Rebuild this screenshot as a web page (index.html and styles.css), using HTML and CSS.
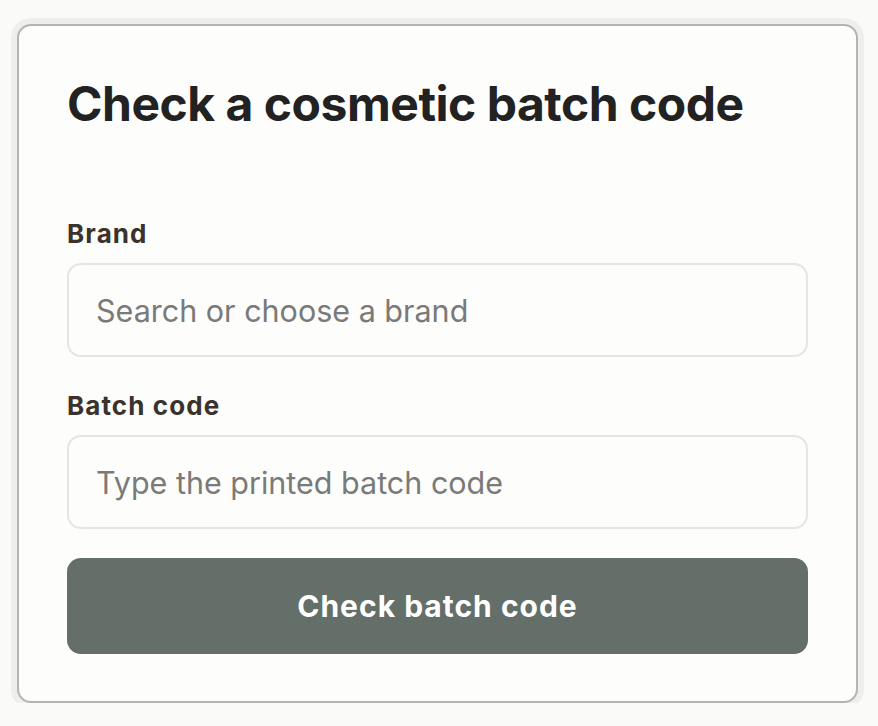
FILE: index.html
```html
<!DOCTYPE html>
<html lang="en">
<head>
    <meta charset="UTF-8">
    <meta name="viewport" content="width=device-width, initial-scale=1.0">
    <title>Check a cosmetic batch code</title>
    <link rel="stylesheet" href="styles.css">
</head>
<body>
    <div class="card">
        <h1>Check a cosmetic batch code</h1>

        <form class="batch-form" onsubmit="return false;">
            <div class="field">
                <label for="brand">Brand</label>
                <input id="brand" name="brand" type="text" placeholder="Search or choose a brand">
            </div>

            <div class="field">
                <label for="code">Batch code</label>
                <input id="code" name="code" type="text" placeholder="Type the printed batch code">
            </div>

            <button type="submit" class="check-button">Check batch code</button>
        </form>
    </div>
</body>
</html>
```

FILE: styles.css
```css
body {
    font-family: Inter, "Noto Sans", sans-serif;
    margin: 0;
    padding: 24px 0 0 17px;
    background-color: #fafaf8;
}

.card {
    width: 841px;
    box-sizing: border-box;
    background-color: #fdfdfc;
    border: 2px solid #b2b6b2;
    border-radius: 14px;
    box-shadow: 0 0 0 6px #eeeeec;
    padding: 48px 48px 47px;
}

h1 {
    margin: 0 0 85px;
    font-size: 48px;
    line-height: 60px;
    font-weight: 700;
    color: #222222;
    letter-spacing: -0.01em;
}

.field {
    margin-bottom: 34px;
}

.field:last-of-type {
    margin-bottom: 29px;
}

label {
    display: block;
    font-size: 26px;
    line-height: 30px;
    font-weight: 700;
    color: #3a322d;
    letter-spacing: 1.1px;
    margin-bottom: 14px;
}

input {
    display: block;
    width: 100%;
    box-sizing: border-box;
    height: 94px;
    padding: 0 27px;
    border: 2px solid #e5e5e1;
    border-radius: 14px;
    background-color: #fdfdfc;
    font-family: inherit;
    font-size: 30.5px;
    color: #222222;
}

input::placeholder {
    color: #7a7a78;
}

.check-button {
    display: block;
    width: 100%;
    height: 96px;
    border: none;
    border-radius: 14px;
    background-color: #636f68;
    color: #ffffff;
    font-family: inherit;
    font-size: 30px;
    font-weight: 700;
    letter-spacing: 1px;
    cursor: pointer;
}
```
